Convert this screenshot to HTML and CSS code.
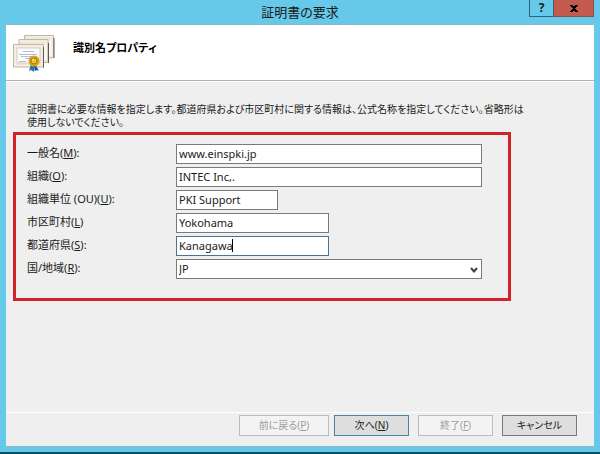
FILE: index.html
```html
<!DOCTYPE html>
<html lang="ja">
<head>
    <meta charset="UTF-8">
    <meta name="viewport" content="width=device-width, initial-scale=1.0">
    <title>証明書の要求</title>
    <link rel="stylesheet" href="styles.css">
</head>
<body>
    <div class="window">
        <header class="titlebar">
            <h1>証明書の要求</h1>
            <div class="window-buttons">
                <button type="button" class="help">?</button>
                <button type="button" class="close" aria-label="閉じる">
                    <svg width="8" height="7" viewBox="0 0 8 7"><path d="M0 0h3v1h2V0h3v1H7v1H6v1H5v1h1v1h1v1h1v1H5V6H3v1H0V6h1V5h1V4h1V3H2V2H1V1H0z"/></svg>
                </button>
            </div>
        </header>

        <form class="wizard">
            <div class="page-header">
                <svg class="certificates" width="42" height="37" viewBox="0 0 42 37">
                    <g fill="#eee6d6" stroke="#c4b8a2">
                        <path d="M11.500.5h29v22.500h-29z"/>
                        <path d="M6 4.500h29v23h-29z"/>
                        <path d="M.5 9.500h30v22.500h-30z"/>
                    </g>
                    <g fill="none" stroke="#fff" stroke-dasharray="1 1">
                        <path d="M13 2h26v19.500"/>
                        <path d="M7.500 6h26v20"/>
                        <path d="M2 11h27v19.500h-27z"/>
                    </g>
                    <path d="M37 5v16M32 9v16" stroke="#faf8f2" stroke-width="2"/>
                    <path d="M30.500 12v20.500M35.500 8v20M41 3v20" stroke="#5d564b" fill="none"/>
                    <path d="M4 13h23v15h-23z" fill="#fbfbff" stroke="#d6cebf"/>
                    <path d="M10 16.500h11M6 19.500h18M8 21.500h14M12 23.500h7M6 26.500h7" stroke="#b8bdd4"/>
                    <path d="M18 29l-2 7 2-1 3 2 1-7z" fill="#2475b5"/>
                    <path d="M22 29l4 7-2-1-2 1-1-6z" fill="#155391"/>
                    <circle cx="21" cy="26" r="5.500" fill="#d5a21b"/>
                    <circle cx="21" cy="26" r="3" fill="#edc338" stroke="#ad7a09"/>
                    <path d="M19 25l2-1" stroke="#fff0a0"/>
                </svg>
                <h2>識別名プロパティ</h2>
            </div>

            <div class="page-body">
                <p>証明書に必要な情報を指定します。都道府県および市区町村に関する情報は、公式名称を指定してください。省略形は<br>使用しないでください。</p>

                <div class="fields">
                    <label for="common-name">一般名(<u>M</u>):</label>
                    <input type="text" id="common-name" value="www.einspki.jp" accesskey="m">

                    <label for="organization">組織(<u>O</u>):</label>
                    <input type="text" id="organization" value="INTEC Inc,." accesskey="o">

                    <label for="unit">組織単位 (OU)(<u>U</u>):</label>
                    <input type="text" id="unit" class="short" value="PKI Support" accesskey="u">

                    <label for="city">市区町村(<u>L</u>)</label>
                    <input type="text" id="city" class="medium" value="Yokohama" accesskey="l">

                    <label for="state">都道府県(<u>S</u>):</label>
                    <div class="active medium">
                        <input type="text" id="state" value="Kanagawa" accesskey="s">
                        <span class="caret"></span>
                    </div>

                    <label for="country">国/地域(<u>R</u>):</label>
                    <div class="dropdown">
                        <select id="country" accesskey="r">
                            <option>JP</option>
                        </select>
                        <svg class="arrow" width="8" height="6" viewBox="0 0 8 6"><path d="M1 1l3 3.500L7 1" fill="none" stroke="#404040" stroke-width="2"/></svg>
                    </div>
                </div>
            </div>

            <footer class="page-footer">
                <button type="button" class="back" disabled>前に戻る(<u>P</u>)</button>
                <button type="button" class="next">次へ(<u>N</u>)</button>
                <button type="button" disabled>終了(<u>F</u>)</button>
                <button type="button">キャンセル</button>
            </footer>
        </form>
    </div>
</body>
</html>
```

FILE: styles.css
```css
* {
    margin: 0;
    padding: 0;
    box-sizing: border-box;
}

body {
    font-family: "Noto Sans", "Noto Sans CJK JP", sans-serif;
    font-size: 11px;
    font-feature-settings: "palt";
    color: #1a1a1a;
}

input, select, button {
    font: inherit;
    font-feature-settings: inherit;
    color: inherit;
}

/* Window frame */
.window {
    display: flex;
    flex-direction: column;
    min-height: 100vh;
    padding: 0 6px 5px;
    background-color: #66c9e9;
    border-bottom: 2px solid #0b5265;
}

.titlebar {
    position: relative;
    height: 24px;
    text-align: center;
}

.titlebar h1 {
    font-size: 13px;
    font-weight: normal;
    line-height: 24px;
}

.window-buttons {
    position: absolute;
    top: 0;
    right: 0;
    display: flex;
    height: 17px;
}

.window-buttons button {
    display: flex;
    align-items: center;
    justify-content: center;
    border: 1px solid #2c6579;
    border-top: none;
}

.window-buttons .help {
    width: 25px;
    background-color: #66c9e9;
    font-size: 12px;
    font-weight: bold;
    line-height: 14px;
}

.window-buttons .close {
    width: 40px;
    background-color: #c35a50;
    border-color: #86504f;
    border-left: none;
}

/* Wizard page */
.wizard {
    flex: 1;
    display: flex;
    flex-direction: column;
    background-color: #efefef;
    border-top: 1px solid #8ab8c6;
    border-bottom: 1px solid #8ab8c6;
}

.page-header {
    display: flex;
    align-items: flex-start;
    gap: 18px;
    height: 56px;
    padding: 10px 7px;
    background-color: #fff;
    border-bottom: 1px solid #b0b0b0;
}

.page-header h2 {
    font-size: 11px;
    line-height: 26px;
    color: #000;
}

.page-body {
    flex: 1;
    padding-top: 21px;
    border-top: 1px solid #fff;
}

.page-body p {
    padding-left: 21px;
    font-size: 10px;
    line-height: 13px;
}

.fields {
    display: grid;
    grid-template-columns: 149px 1fr;
    grid-auto-rows: 20px;
    row-gap: 3px;
    margin: 3px 83px 0 7px;
    padding: 9px 26px 19px 11px;
    border: 3px solid #d2232a;
}

.fields label {
    line-height: 18px;
}

.fields input, .fields select {
    width: 100%;
    height: 20px;
    padding: 0 2px 2px;
    background-color: #fff;
    border: 1px solid #7a7a7a;
    border-radius: 0;
    outline: none;
    appearance: none;
}

.fields .short {
    width: 33.333%;
}

.fields .medium {
    width: 50%;
}

.active, .dropdown {
    position: relative;
}

.fields .active input {
    border-color: #4c7393;
}

.caret {
    position: absolute;
    top: 3px;
    left: 56px;
    width: 1px;
    height: 13px;
    background-color: #000;
}

.arrow {
    position: absolute;
    top: 8px;
    right: 4px;
    pointer-events: none;
}

/* Wizard buttons */
.page-footer {
    display: flex;
    justify-content: flex-end;
    gap: 9px;
    padding: 2px 17px 10px;
    border-top: 1px solid #fff;
}

.page-footer button {
    width: 75px;
    height: 21px;
    background-color: #dedede;
    border: 1px solid #7a7a7a;
    font-size: 10px;
    line-height: 19px;
}

.page-footer .back {
    width: 90px;
    margin-right: -4px;
}

.page-footer .next {
    border-color: #4c84a0;
}

.page-footer button:disabled {
    background-color: #f3f3f3;
    border-color: #bcbcbc;
    color: #a0a0a0;
}
```
